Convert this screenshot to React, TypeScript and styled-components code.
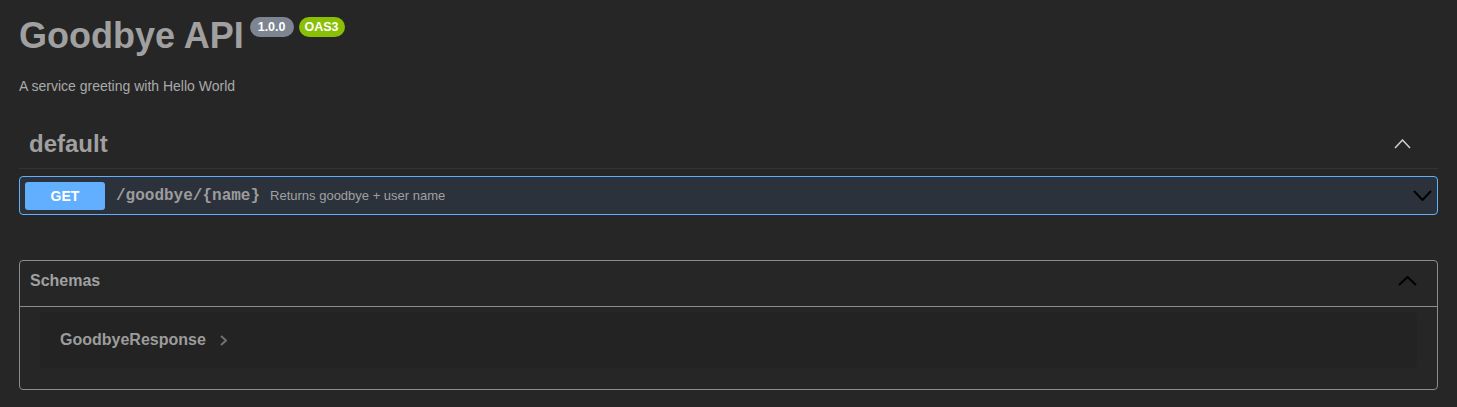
import React from "react";
import styled, { createGlobalStyle } from "styled-components";

const Global = createGlobalStyle`
  html, body { margin: 0; padding: 0; background: #262626; }
  body { font-family: "Liberation Sans", Arial, sans-serif; color: #a0a0a0; }
`;

const Page = styled.div`
  padding: 0 19px 20px 19px;
  display: flex;
  flex-direction: column;
`;

const Info = styled.div`
  padding-top: 14px;
  display: flex;
  flex-direction: column;
`;

const TitleRow = styled.div`
  display: flex;
  align-items: flex-start;
  gap: 5px;
`;

const Title = styled.h2`
  margin: 0 1px 0 0;
  font-size: 36px;
  line-height: 43px;
  font-weight: 700;
  color: #a0a0a0;
`;

const Badge = styled.span<{ $bg: string; $px: number }>`
  margin-top: 3px;
  height: 20px;
  line-height: 20px;
  padding: 0 ${(p) => p.$px}px;
  border-radius: 57px;
  background: ${(p) => p.$bg};
  color: #ffffff;
  font-size: 12.5px;
  font-weight: 700;
`;

const Description = styled.p`
  margin: 20px 0 0 0;
  font-size: 14px;
  line-height: 18px;
  color: #aaaaaa;
`;

const TagHeader = styled.div`
  margin-top: 25px;
  display: flex;
  align-items: center;
  justify-content: space-between;
  padding: 0 27px 0 10px;
  height: 48px;
  border-bottom: 1px solid #333333;
`;

const TagTitle = styled.h3`
  margin: 0;
  font-size: 24px;
  font-weight: 700;
  color: #a0a0a0;
`;

const OpBlock = styled.div`
  margin-top: 7px;
  display: flex;
  align-items: center;
  height: 37px;
  padding: 0 5px;
  border: 1px solid #61affe;
  border-radius: 4px;
  background: #2c323b;
`;

const Method = styled.span`
  width: 80px;
  height: 28px;
  line-height: 28px;
  text-align: center;
  background: #61affe;
  color: #ffffff;
  border-radius: 3px;
  font-size: 14px;
  font-weight: 700;
`;

const Path = styled.span`
  margin-left: 11px;
  font-family: "Liberation Mono", "Courier New", monospace;
  font-size: 16px;
  font-weight: 700;
  color: #9c9c9c;
`;

const Summary = styled.span`
  margin-left: 10px;
  flex: 1;
  font-size: 13px;
  color: #a0a0a0;
`;

const Models = styled.section`
  margin-top: 45px;
  border: 1px solid #8c8c8c;
  border-radius: 4px;
  display: flex;
  flex-direction: column;
`;

const ModelsHeader = styled.div`
  height: 40px;
  display: flex;
  align-items: center;
  justify-content: space-between;
  padding: 0 20px 5px 10px;
  border-bottom: 1px solid #8c8c8c;
`;

const ModelsTitle = styled.h4`
  margin: 0;
  font-size: 16px;
  font-weight: 700;
  color: #a0a0a0;
`;

const ModelsBody = styled.div`
  padding: 5px 20px 21px 20px;
`;

const ModelBox = styled.div`
  height: 56px;
  border-radius: 4px;
  background: #232323;
  display: flex;
  align-items: center;
  padding-left: 20px;
  gap: 14px;
`;

const ModelName = styled.span`
  font-size: 16px;
  font-weight: 700;
  color: #9c9c9c;
`;

const Chevron = ({ dir, color, w, h, sw }: { dir: "up" | "down" | "right"; color: string; w: number; h: number; sw: number }) => {
  const d =
    dir === "up" ? `M1 ${h - 1} L${w / 2} 1 L${w - 1} ${h - 1}` :
    dir === "down" ? `M1 1 L${w / 2} ${h - 1} L${w - 1} 1` :
    `M1 1 L${w - 1} ${h / 2} L1 ${h - 1}`;
  return (
    <svg width={w} height={h} viewBox={`0 0 ${w} ${h}`} fill="none">
      <path d={d} stroke={color} strokeWidth={sw} />
    </svg>
  );
};

export default function App() {
  return (
    <>
      <Global />
      <Page>
        <Info>
          <TitleRow>
            <Title>Goodbye API</Title>
            <Badge $bg="#7d8492" $px={8}>1.0.0</Badge>
            <Badge $bg="#89bf04" $px={6}>OAS3</Badge>
          </TitleRow>
          <Description>A service greeting with Hello World</Description>
        </Info>
        <TagHeader>
          <TagTitle>default</TagTitle>
          <Chevron dir="up" color="#d0d0d0" w={17} h={10} sw={1.5} />
        </TagHeader>
        <OpBlock>
          <Method>GET</Method>
          <Path>/goodbye/&#8203;{"{"}name{"}"}</Path>
          <Summary>Returns goodbye + user name</Summary>
          <Chevron dir="down" color="#000000" w={19} h={11} sw={2} />
        </OpBlock>
        <Models>
          <ModelsHeader>
            <ModelsTitle>Schemas</ModelsTitle>
            <Chevron dir="up" color="#000000" w={19} h={10} sw={2} />
          </ModelsHeader>
          <ModelsBody>
            <ModelBox>
              <ModelName>GoodbyeResponse</ModelName>
              <Chevron dir="right" color="#707070" w={7} h={11} sw={2} />
            </ModelBox>
          </ModelsBody>
        </Models>
      </Page>
    </>
  );
}
